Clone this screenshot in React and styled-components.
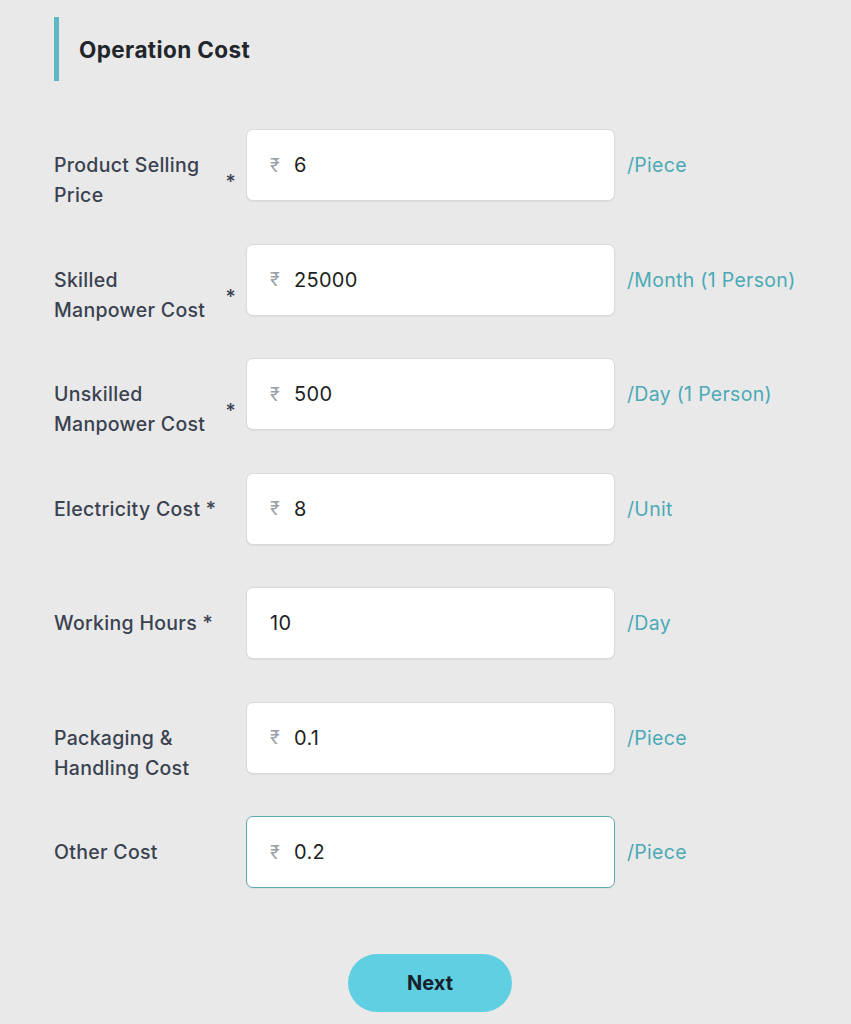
import React, {useState} from 'react';
import styled, {createGlobalStyle} from 'styled-components';

const GlobalStyle = createGlobalStyle`
  html, body {
    margin: 0;
    padding: 0;
    background: #e9e9e9;
    font-family: Inter, "Noto Sans", sans-serif;
  }
`;

const Page = styled.div`
  width: 851px;
  min-height: 1024px;
  padding: 17px 0 0 54px;
  box-sizing: border-box;
`;

const Header = styled.div`
  display: flex;
  align-items: center;
  height: 64px;
  border-left: 5px solid #5bb8c4;
  padding-left: 20px;
`;

const Title = styled.h2`
  margin: 0;
  font-size: 22.5px;
  font-weight: 700;
  color: #22252a;
  letter-spacing: 0.4px;
`;

const Form = styled.div`
  display: flex;
  flex-direction: column;
  gap: 42.5px;
  margin-top: 48px;
`;

const Row = styled.div`
  display: flex;
  align-items: flex-start;
  height: 72px;
`;

const Label = styled.div`
  width: 182px;
  margin-right: 10px;
  padding-top: 21px;
  display: flex;
  align-items: center;
  gap: 4px;
  font-size: 19.5px;
  line-height: 30px;
  font-weight: 500;
  letter-spacing: 0.3px;
  color: #3a4250;
`;

const LabelText = styled.span`
  flex: 0 1 auto;
`;

const Star = styled.span`
  flex: none;
  padding-top: ${p => (p.$low ? '4px' : '0')};
`;

const InputBox = styled.label`
  width: 369px;
  height: 72px;
  box-sizing: border-box;
  display: flex;
  align-items: center;
  padding-left: 23px;
  background: #fff;
  border: 1px solid ${p => (p.$focused ? '#5fa9b1' : '#d9d9d9')};
  border-radius: 7px;
  box-shadow: 0 1px 1px rgba(0, 0, 0, 0.05);
`;

const Rupee = styled.span`
  font-size: 18px;
  color: #9aa0a8;
  width: 24px;
  flex: none;
`;

const Field = styled.input`
  flex: 1;
  border: none;
  outline: none;
  background: transparent;
  font-family: inherit;
  font-size: 20px;
  letter-spacing: 0.3px;
  color: #1d1f22;
  padding: 0;
  min-width: 0;
`;

const Unit = styled.span`
  margin-left: 12px;
  line-height: 72px;
  font-size: 19.5px;
  letter-spacing: 0.3px;
  color: #4ba9b6;
  white-space: nowrap;
`;

const Footer = styled.div`
  display: flex;
  justify-content: center;
  margin-top: 66px;
  padding-right: 45px;
  padding-bottom: 12px;
`;

const NextButton = styled.button`
  width: 164px;
  height: 58px;
  border: none;
  border-radius: 29px;
  background: #5fcfe1;
  color: #15202b;
  font-family: inherit;
  font-size: 20px;
  font-weight: 700;
  cursor: pointer;
`;

const fields = [
    {label: 'Product Selling Price', star: 'wrap', rupee: true, value: '6', unit: '/Piece'},
    {label: 'Skilled Manpower Cost', star: 'wrap', rupee: true, value: '25000', unit: '/Month (1 Person)'},
    {label: 'Unskilled Manpower Cost', star: 'wrap', rupee: true, value: '500', unit: '/Day (1 Person)'},
    {label: 'Electricity Cost', star: 'inline', rupee: true, value: '8', unit: '/Unit'},
    {label: 'Working Hours', star: 'inline', rupee: false, value: '10', unit: '/Day'},
    {label: 'Packaging & Handling Cost', star: null, rupee: true, value: '0.1', unit: '/Piece'},
    {label: 'Other Cost', star: null, rupee: true, value: '0.2', unit: '/Piece', focused: true},
];

const App = () => {
    const [values, setValues] = useState(fields.map(f => f.value));

    const update = (i, v) => {
        const next = [...values];
        next[i] = v;
        setValues(next);
    };

    return (
        <Page>
            <GlobalStyle/>
            <Header>
                <Title>Operation Cost</Title>
            </Header>
            <Form>
                {fields.map((f, i) => (
                    <Row key={f.label}>
                        <Label>
                            {f.star === 'inline'
                                ? <LabelText>{f.label} *</LabelText>
                                : <LabelText>{f.label}</LabelText>}
                            {f.star === 'wrap' && <Star $low>*</Star>}
                        </Label>
                        <InputBox $focused={f.focused}>
                            {f.rupee && <Rupee>₹</Rupee>}
                            <Field value={values[i]} onChange={e => update(i, e.target.value)}/>
                        </InputBox>
                        <Unit>{f.unit}</Unit>
                    </Row>
                ))}
            </Form>
            <Footer>
                <NextButton>Next</NextButton>
            </Footer>
        </Page>
    );
};

export default App;
